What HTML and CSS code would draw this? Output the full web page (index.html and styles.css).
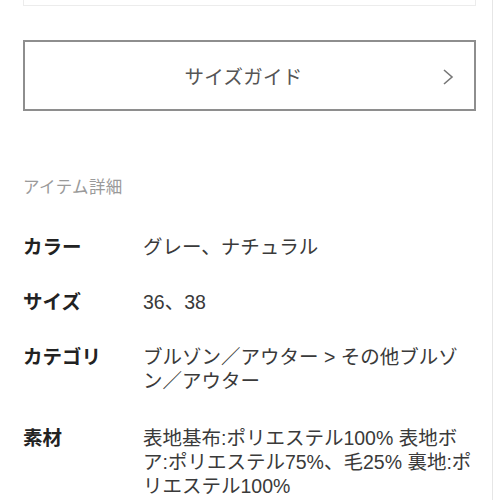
FILE: index.html
```html
<!DOCTYPE html>
<html lang="ja">
<head>
<meta charset="utf-8">
<link rel="stylesheet" href="styles.css">
</head>
<body>
<div class="page">
  <div class="top-box"></div>
  <a class="size-guide" href="#">
    <span class="size-guide-label">サイズガイド</span>
    <svg class="chevron" width="12" height="18" viewBox="0 0 12 18"><path d="M2 2 L10 9 L2 16" fill="none" stroke="#777" stroke-width="1.6"/></svg>
  </a>
  <h2 class="section-title">アイテム詳細</h2>
  <dl class="details">
    <div class="row"><dt>カラー</dt><dd>グレー、ナチュラル</dd></div>
    <div class="row"><dt>サイズ</dt><dd>36、38</dd></div>
    <div class="row"><dt>カテゴリ</dt><dd>ブルゾン／アウター &gt; その他ブルゾン／アウター</dd></div>
    <div class="row"><dt>素材</dt><dd>表地基布:ポリエステル100% 表地ボア:ポリエステル75%、毛25% 裏地:ポリエステル100%</dd></div>
  </dl>
</div>
</body>
</html>
```
FILE: styles.css
```css
html, body {
  margin: 0;
  padding: 0;
  background: #fff;
}
body {
  font-family: "Liberation Sans", "Noto Sans CJK JP", sans-serif;
  color: #333;
  height: 500px;
  overflow: hidden;
}
.page {
  width: 453px;
  padding: 0 16px 0 23px;
  border-right: 1px solid #e6e6e6;
  min-height: 500px;
}
.top-box {
  height: 5px;
  border: 1px solid #ececec;
  border-top: none;
}
.size-guide {
  margin-top: 34px;
  height: 67px;
  padding-right: 12px;
  border: 2px solid #8e8e8e;
  display: flex;
  align-items: center;
  justify-content: center;
  position: relative;
  text-decoration: none;
  color: #555;
}
.size-guide-label {
  font-size: 19.5px;
  letter-spacing: 0.3px;
}
.chevron {
  position: absolute;
  right: 20px;
  top: 26px;
}
.section-title {
  margin: 64px 0 0;
  font-size: 16.5px;
  font-weight: normal;
  line-height: 24px;
  color: #9a9a9a;
  letter-spacing: 0.4px;
}
.details {
  margin: 36px 0 0;
  display: flex;
  flex-direction: column;
  gap: 31px;
}
.row {
  display: flex;
}
.row dt {
  width: 120px;
  flex: none;
  font-weight: bold;
  font-size: 19.5px;
  line-height: 24px;
  color: #222;
}
.row dd {
  margin: 0;
  flex: 1;
  font-size: 19.5px;
  line-height: 24px;
  color: #3a3a3a;
}
.row:last-child {
  margin-top: 2px;
}
```
